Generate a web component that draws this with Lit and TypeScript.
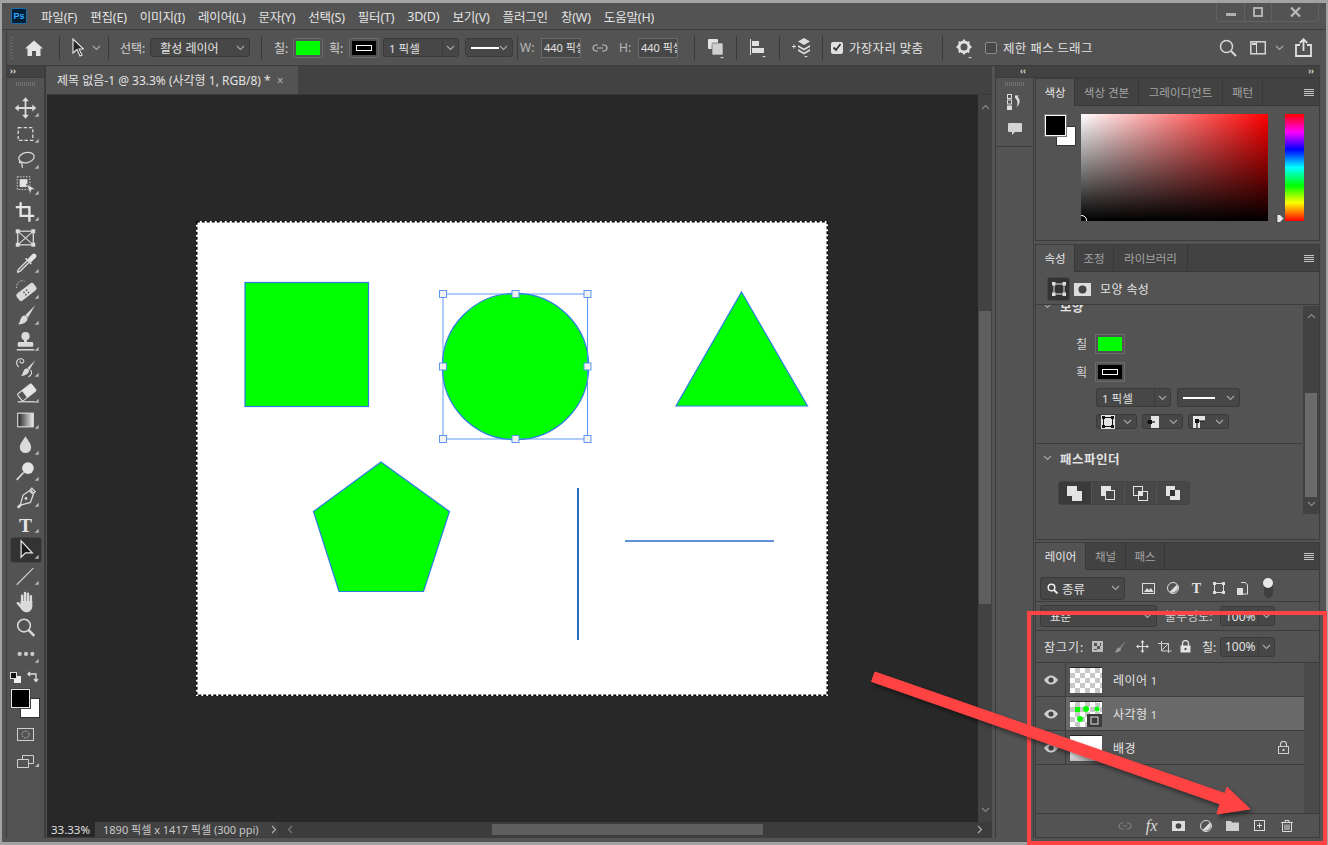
import { LitElement, css, html, svg } from 'lit';
import { customElement } from 'lit/decorators.js';

const chev = html`<svg class="chev" width="9" height="6" viewBox="0 0 9 6"><path d="M1 1l3.500 3.500L8 1" fill="none" stroke="#a8a8a8" stroke-width="1.1"/></svg>`;
const burger = html`<svg class="burger" width="10" height="8" viewBox="0 0 10 8"><path d="M0 .5h10M0 2.500h10M0 4.500h10M0 6.500h10" stroke="#c4c4c4" stroke-width="1"/></svg>`;
const eye = html`<svg width="14" height="10" viewBox="0 0 14 10"><path d="M0 5c2-3 4.500-4.500 7-4.500S12 2 14 5c-2 3-4.500 4.500-7 4.500S2 8 0 5z" fill="#cfcfcf"/><circle cx="7" cy="5" r="2.600" fill="#444"/></svg>`;

// tool icons, drawn on a 38x26 cell centred on 19,13
const tools = [
	svg`<path d="M19 4v18M10 13h18" stroke="#dadada" stroke-width="1.800"/><path d="M19 2l3.500 4h-7zM19 24l3.500-4h-7zM8 13l4-3.500v7zM30 13l-4-3.500v7z" fill="#dadada"/>`,
	svg`<rect x="11.500" y="6.500" width="15" height="13" fill="none" stroke="#dadada" stroke-width="1.300" stroke-dasharray="3.500 2"/>`,
	svg`<ellipse cx="20" cy="10.500" rx="8" ry="5.200" transform="rotate(-12 20 10.500)" fill="none" stroke="#dadada" stroke-width="1.300"/><path d="M13 14c-1 2 1 2 2 2s0 3 1 5" fill="none" stroke="#dadada" stroke-width="1.300"/>`,
	svg`<rect x="10.500" y="3.500" width="13" height="13" fill="none" stroke="#dadada" stroke-dasharray="1.500 1.500"/><rect x="13" y="6" width="8" height="8" fill="#e4e4e4"/><path d="M20 11l9 5-4 1-1 5z" fill="#e4e4e4" stroke="#535353" stroke-width=".8"/>`,
	svg`<path d="M14 3v14h14M9 8h14v15" fill="none" stroke="#e4e4e4" stroke-width="2.400"/>`,
	svg`<rect x="11" y="6" width="16" height="14" fill="none" stroke="#dadada" stroke-width="1.300"/><path d="M11 6l16 14M27 6L11 20" stroke="#dadada" stroke-width="1.100"/><path d="M9 4h4v4H9zM25 4h4v4h-4zM9 18h4v4H9zM25 18h4v4h-4z" fill="#dadada"/>`,
	svg`<path d="M21 8l5-5c1-1 2.500-1 3.500 0s1 2.500 0 3.500l-5 5z" fill="#e4e4e4"/><path d="M23 11l-9 9c-1 1-2 1-3 1.500-.5-1 0-2 1-3l9-9" fill="none" stroke="#dadada" stroke-width="1.400"/><path d="M19 7l6 6" stroke="#e4e4e4" stroke-width="1.500"/>`,
	svg`<g transform="rotate(-38 20 15)"><rect x="9" y="10.500" width="22" height="9" rx="2.500" fill="#dadada"/><path d="M17 13h1.500v1.500H17zM20.500 13H22v1.500h-1.500zM17 16h1.500v1.500H17zM20.500 16H22v1.500h-1.500z" fill="#535353"/></g><path d="M10 11a6 6 0 0 1 8-7" fill="none" stroke="#dadada" stroke-dasharray="1.500 1.500"/>`,
	svg`<path d="M29 2l-10 10 2.500 2.500z" fill="#dadada"/><path d="M18 12.500c2.500 0 4 2.500 2.500 5-1.500 3-5.500 4-9.500 4 2-1 2-3 3-5.500.8-2 2-3.500 4-3.500z" fill="#dadada"/>`,
	svg`<circle cx="19" cy="7" r="4.200" fill="#dadada"/><path d="M17.500 10h3v4h-3z" fill="#dadada"/><rect x="11" y="13" width="16" height="5" rx="1.500" fill="#dadada"/><path d="M10 21h18" stroke="#dadada" stroke-width="1.500"/>`,
	svg`<path d="M29 5l-8 8 2 2zM20 13.500c2 0 3.500 2 2 4-1.500 2.500-4 3.500-8 3.500 2-1 2-3 3-5 .7-1.500 1.500-2.500 3-2.500z" fill="#dadada"/><path d="M12 12C8 8 10 3 15 3.500c3 .5 3 4 .5 4.500C13 8 13 6 14 5.500M24 15c2 2 2 5-2 7" fill="none" stroke="#dadada" stroke-width="1.100"/>`,
	svg`<g transform="rotate(-38 20 11)"><rect x="11" y="7" width="18" height="9" rx="1.500" fill="none" stroke="#dadada" stroke-width="1.200"/><path d="M17 7h12v9H17z" fill="#e4e4e4"/></g><path d="M11 21h18" stroke="#dadada" stroke-width="1.300"/>`,
	svg`<rect x="11" y="6" width="16" height="14" fill="url(#gr)" stroke="#dadada" stroke-width="1.200"/>`,
	svg`<path d="M19 3c3 5 5.800 7.500 5.800 11.500a5.800 5.800 0 0 1-11.600 0C13.200 10.500 16 8 19 3z" fill="#dadada"/>`,
	svg`<circle cx="21.500" cy="9" r="6" fill="#e4e4e4"/><path d="M17 13.500L10 21" stroke="#dadada" stroke-width="1.800"/>`,
	svg`<path d="M25.500 3l3.500 3.500-1.500 1.500L24 4.500zM23 5.500l4 4-3 8-9 2.500-3 3-1-1 3-3 2.500-9z" fill="none" stroke="#dadada" stroke-width="1.300"/><circle cx="19.500" cy="13.500" r="1.400" fill="#dadada"/>`,
	svg`<text x="19" y="21" text-anchor="middle" class="ti">T</text>`,
	svg`<path d="M14.500 3.500v17l4.500-4.500h7z" fill="#1a1a1a" stroke="#e6e6e6" stroke-width="1.300"/>`,
	svg`<path d="M10 22L27 5" stroke="#cfcfcf" stroke-width="1.200"/>`,
	svg`<path d="M15.500 14V6.500M18.500 13V3.800M21.500 13V4.500M24.500 14V7" stroke="#dadada" stroke-width="2.500" stroke-linecap="round"/><path d="M14 12h12v5c0 4-3 6.500-6 6.500s-4.500-1.500-6-4l-4.500-5.500c1-1.500 2.500-1.200 3.500 0l1 1z" fill="#dadada"/>`,
	svg`<circle cx="17.500" cy="10.500" r="6.500" fill="none" stroke="#dadada" stroke-width="1.600"/><path d="M22 15l6 6" stroke="#dadada" stroke-width="2.500"/>`,
	svg`<circle cx="13" cy="13" r="2.200" fill="#c8c8c8"/><circle cx="19.500" cy="13" r="2.200" fill="#c8c8c8"/><circle cx="26" cy="13" r="2.200" fill="#c8c8c8"/>`,
];
const arrowed = [0, 1, 2, 3, 4, 6, 7, 8, 9, 10, 11, 12, 13, 14, 15, 16, 17, 18, 21];

const menus = ['파일(F)', '편집(E)', '이미지(I)', '레이어(L)', '문자(Y)', '선택(S)', '필터(T)', '3D(D)', '보기(V)', '플러그인', '창(W)', '도움말(H)'];

@customElement('app-root')
export class AppRoot extends LitElement {

	static styles = css`
		:host {
			display: block;
			width: 1328px;
			height: 845px;
			overflow: hidden;
			font-family: 'Noto Sans', 'Noto Sans CJK KR', sans-serif;
			font-size: 12px;
			color: #e2e2e2;
		}
		* { box-sizing: border-box; }
		svg { display: block; flex: none; }
		.app {
			position: relative;
			width: 1328px;
			height: 845px;
			padding: 3px 2px;
			background: #a3a3a3;
		}
		.win {
			height: 839px;
			display: flex;
			flex-direction: column;
			padding: 0 6px 4px 4px;
			background: #535353;
		}

		/* menu */
		.menu {
			height: 27px;
			margin-right: -6px;
			margin-left: -4px;
			padding-left: 9px;
			display: flex;
			align-items: center;
			border-bottom: 1px solid #3c3c3c;
			white-space: nowrap;
		}
		.ps {
			width: 16px;
			height: 16px;
			margin-right: 14px;
			background: #001e36;
			border: 1px solid #1d6ea8;
			border-radius: 2px;
			color: #31a8ff;
			font: bold 9px/14px 'Liberation Sans', sans-serif;
			text-align: center;
		}
		.menu span { margin-right: 13px; font-size: 12.500px; color: #e4e4e4; letter-spacing: -.17px; }
		.winbtns {
			margin-left: auto;
			margin-right: 7px;
			margin-top: -8px;
			width: 103px;
			height: 19px;
			display: flex;
			border: 1px solid #626262;
			border-top: 0;
			border-radius: 0 0 4px 4px;
		}
		.winbtns div { display: flex; align-items: center; justify-content: center; border-right: 1px solid #626262; }
		.winbtns div:last-child { border: 0; }
		.w1 { width: 28px; }
		.w2 { width: 27px; }
		.w3 { flex: 1; }

		/* options */
		.opts {
			height: 36px;
			display: flex;
			align-items: center;
			border-left: 1px solid #3c3c3c;
			border-bottom: 1px solid #3c3c3c;
			white-space: nowrap;
		}
		.g {
			height: 24px;
			display: flex;
			align-items: center;
			border-right: 1px solid #3a3a3a;
			flex: none;
		}
		.g1 { width: 53px; padding-left: 3px; }
		.grip { width: 3px; height: 22px; margin-right: 12px; background: repeating-linear-gradient(#666 0 1px, transparent 1px 3px); }
		.g2 { width: 49px; padding-left: 12px; gap: 8px; }
		.g3 { width: 153px; padding-left: 11px; gap: 5px; }
		.g4 { width: 256px; padding-left: 12px; }
		.g5 { width: 177px; padding-left: 2px; }
		.g6 { width: 42px; padding-left: 12px; }
		.g7 { width: 43px; padding-left: 12px; }
		.g8 { width: 43px; padding-left: 11px; }
		.g9 { width: 120px; padding-left: 8px; gap: 6px; }
		.g10 { padding-left: 12px; border: 0; }
		.right { margin-left: auto; margin-right: 8px; display: flex; align-items: center; }
		.mr-layout { margin-left: 13px; }
		.mr-chev { margin: 0 11px 0 9px; }
		.lbl { color: #d4d4d4; font-size: 12px; }
		.l14 { width: 19px; }
		.l15 { width: 20px; margin-left: 6px; }
		.l16 { width: 21px; color: #b8b8b8; }
		.l17 { width: 19px; margin-left: 11px; color: #b8b8b8; }
		.combo {
			height: 19px;
			display: flex;
			align-items: center;
			background: #474747;
			border: 1px solid #3a3a3a;
			border-radius: 3px;
			font-size: 11.500px;
			padding-left: 5px;
			flex: none;
		}
		.combo .chev { margin-left: auto; margin-right: 4px; }
		.combo .div { width: 1px; align-self: stretch; background: #3a3a3a; margin-left: auto; }
		.combo .div + .chev { margin-left: 3px; margin-right: 3px; }
		.line { width: 32px; height: 2px; background: #fff; }
		.c100 { width: 100px; padding-left: 9px; font-size: 12px; }
		.c76 { width: 76px; margin-left: 4px; }
		.c48 { width: 48px; margin-left: 6px; }
		.swatch {
			width: 30px;
			height: 20px;
			display: flex;
			align-items: center;
			justify-content: center;
			border: 1px solid #6a6a6a;
			padding: 2px;
			flex: none;
		}
		.swatch i { display: flex; width: 100%; height: 100%; align-items: center; justify-content: center; }
		.green { background: #00ff00; }
		.black { background: #000; }
		.swatch b { display: block; width: 16px; height: 6px; border: 1px solid #fff; }
		.num {
			width: 40px;
			height: 20px;
			border: 1px solid #6a6a6a;
			background: #474747;
			font-size: 11px;
			line-height: 18px;
			padding-left: 2px;
			overflow: hidden;
			flex: none;
		}
		.link { margin-left: 11px; }
		.ck {
			width: 12px;
			height: 12px;
			border-radius: 2px;
			flex: none;
			display: flex;
			align-items: center;
			justify-content: center;
		}
		.on { background: #e0e0e0; }
		.off { border: 1px solid #8a8a8a; background: #474747; margin: 0 6px 0 10px; }
		.txt { font-size: 12.500px; color: #e2e2e2; letter-spacing: .3px; }

		/* main */
		.main { flex: 1; min-height: 0; display: flex; }

		.tools {
			width: 40px;
			display: flex;
			flex-direction: column;
			border-left: 1px solid #3c3c3c;
			border-right: 2px solid #3c3c3c;
		}
		.coll {
			height: 12px;
			background: #424242;
			border-bottom: 1px solid #3c3c3c;
			color: #ddd;
			font-size: 8px;
			line-height: 10px;
			padding-left: 3px;
			font-weight: bold;
			flex: none;
		}
		.tgrip { height: 4px; margin: 4px 9px 0; background: repeating-linear-gradient(90deg, #707070 0 1px, transparent 1px 2px); flex: none; }
		.tlist { margin-top: 9px; display: flex; flex-direction: column; }
		.tool { width: 37px; height: 26px; position: relative; }
		.tool.act::before {
			content: '';
			position: absolute;
			left: 3px;
			right: 2px;
			top: 0;
			bottom: 0;
			background: #333;
			border: 1px solid #454545;
			border-radius: 3px;
		}
		.tool svg { position: relative; }
		.ti { font: bold 20px 'Liberation Serif', serif; fill: #e4e4e4; }
		.fb { position: relative; height: 38px; margin-top: 0; flex: none; }
		.fg, .bg { position: absolute; width: 19px; height: 19px; border: 1px solid #e8e8e8; }
		.fg { background: #000; left: 4px; top: 2px; z-index: 1; box-shadow: 0 0 0 1px #444; }
		.bg { background: #fff; left: 13px; top: 11px; width: 20px; height: 20px; border-color: #333; }
		.ministack { display: flex; align-items: center; gap: 6px; padding-left: 3px; height: 20px; }
		.qm { margin-top: 3px; }
		.sm { margin-top: 12px; }

		.docs { width: 946px; flex: none; display: flex; flex-direction: column; padding-left: 1px; }
		.tabbar { height: 29px; background: #424242; flex: none; display: flex; align-items: flex-end; border-bottom: 1px solid #383838; }
		.doctab {
			width: 251px;
			height: 28px;
			background: #535353;
			display: flex;
			align-items: center;
			padding-left: 10px;
			font-size: 12px;
			color: #e2e2e2;
			white-space: nowrap;
		}
		.doctab em { font-style: normal; margin-left: 6px; color: #b0b0b0; }
		.canrow { flex: 1; min-height: 0; display: flex; }
		.canvas { flex: 1; background: #282828; display: flex; align-items: center; justify-content: center; }
		.doc { width: 632px; height: 475px; background: #fff; margin-right: 1px; }
		.vs {
			width: 14px;
			background: #424242;
			display: flex;
			flex-direction: column;
			align-items: center;
			padding: 9px 0;
			justify-content: space-between;
			position: relative;
		}
		.vthumb { position: absolute; left: 1px; right: 1px; top: 216px; height: 293px; background: #5e5e5e; }
		.status { height: 16px; flex: none; display: flex; align-items: center; background: #424242; border-bottom: 1px solid #3c3c3c; font-size: 11px; white-space: nowrap; }
		.zoom { width: 48px; height: 100%; background: #282828; padding-left: 4px; line-height: 15px; color: #e0e0e0; font-size: 11.500px; }
		.info { width: 183px; height: 100%; padding-left: 8px; line-height: 15px; color: #c8c8c8; display: flex; align-items: center; }
		.info svg { margin-left: 12px; }
		.hs { flex: 1; height: 100%; background: #3c3c3c; position: relative; display: flex; align-items: center; justify-content: space-between; padding: 0 9px; }
		.hthumb { position: absolute; left: 214px; width: 271px; top: 2px; bottom: 2px; background: #5e5e5e; }

		/* dock */
		.dock { width: 325px; margin-left: 3px; display: flex; flex-direction: column; flex: none; }
		.dcoll {
			height: 12px;
			flex: none;
			background: #424242;
			border-bottom: 1px solid #3c3c3c;
			border-left: 1px solid #3c3c3c;
			display: flex;
			justify-content: space-between;
			padding: 0 6px 0 24px;
			font: bold 8px/10px 'Noto Sans', sans-serif;
			color: #ddd;
		}
		.dbody { flex: 1; min-height: 0; display: flex; }
		.narrow {
			width: 39px;
			margin-right: 1px;
			border-left: 1px solid #3c3c3c;
			border-right: 1px solid #3c3c3c;
			flex: none;
		}
		.ntop { height: 69px; border-bottom: 1px solid #3c3c3c; display: flex; flex-direction: column; align-items: center; }
		.ngrip { width: 20px; height: 4px; margin-top: 4px; background: repeating-linear-gradient(90deg, #707070 0 1px, transparent 1px 2px); }
		.nh { margin-top: 8px; }
		.nc { margin-top: 13px; }
		.panels { width: 285px; display: flex; flex-direction: column; }
		.panel { border: 1px solid #3c3c3c; display: flex; flex-direction: column; flex: none; }
		.p1 { height: 163px; margin-bottom: 3px; }
		.p2 { height: 296px; margin-bottom: 2px; }
		.p3 { flex: 1; min-height: 0; }
		.tabs { height: 27px; display: flex; background: #424242; border-bottom: 1px solid #383838; flex: none; font-size: 11.500px; color: #a4a4a4; }
		.tabs div { display: flex; align-items: center; justify-content: center; border-right: 1px solid #383838; white-space: nowrap; padding-bottom: 1px; }
		.tabs .a { background: #535353; color: #e6e6e6; height: 27px; }
		.tabs .burger { margin: 10px 5px 0 auto; }
		.t39 { width: 39px; }
		.t40 { width: 40px; }
		.t50 { width: 50px; }
		.t64 { width: 64px; }
		.t74 { width: 74px; }
		.t84 { width: 84px; }
		.colorbody { position: relative; flex: 1; display: flex; padding: 8px 0 0 45px; }
		.cfg, .cbg { position: absolute; }
		.cbg { left: 20px; top: 20px; width: 20px; height: 20px; background: #fff; border: 1px solid #333; }
		.cfg { left: 9px; top: 9px; width: 21px; height: 21px; background: #000; border: 1px solid #fff; outline: 1px solid #777; z-index: 1; }
		.field { width: 187px; height: 107px; position: relative; background: linear-gradient(to top, #000, transparent), linear-gradient(to right, #fff, #f00); }
		.cursor { position: absolute; left: 0; bottom: 0; }
		.hue {
			width: 19px;
			height: 107px;
			margin-left: 17px;
			background: linear-gradient(#f00, #f0f 17%, #00f 33%, #0ff 50%, #0f0 67%, #ff0 83%, #f00);
		}
		.mark { position: absolute; left: 240px; top: 108px; }
		.shaperow { height: 33px; flex: none; display: flex; align-items: center; padding: 2px 0 0 11px; border-bottom: 1px solid #3c3c3c; }
		.sbtn { width: 23px; height: 24px; background: #333; border: 1px solid #454545; border-radius: 3px; display: flex; align-items: center; justify-content: center; margin-right: 4px; }
		.stitle { margin-left: 9px; font-size: 12px; letter-spacing: .4px; }
		.pbody { flex: 1; min-height: 0; display: flex; overflow: hidden; }
		.pcontent { width: 267px; flex: none; overflow: hidden; }
		.sec { margin-top: -10px; height: 22px; display: flex; align-items: center; padding-left: 7px; gap: 8px; font-weight: bold; font-size: 12.500px; letter-spacing: .3px; }
		.prop { display: flex; align-items: center; height: 20px; }
		.prop .lbl { width: 59px; text-align: right; padding-right: 8px; }
		.pf1 { margin-top: 17px; }
		.pf2 { margin-top: 8px; }
		.ctl { display: flex; margin: 6px 0 0 60px; gap: 6px; }
		.c75 { width: 75px; }
		.c63 { width: 63px; }
		.ctl2 { display: flex; margin: 7px 0 0 60px; gap: 5px; }
		.c41 { width: 41px; height: 15px; padding-left: 4px; }
		.hr { height: 1px; margin: 14px 1px 0 0; background: #3c3c3c; }
		.sec2 { margin-top: 3px; height: 22px; display: flex; align-items: center; padding-left: 7px; gap: 8px; font-weight: bold; font-size: 12.500px; letter-spacing: .5px; }
		.pfb { display: flex; margin: 12px 0 0 22px; width: 132px; height: 24px; border: 1px solid #444; border-radius: 3px; }
		.pfb div { flex: 1; display: flex; align-items: center; justify-content: center; background: #474747; border-right: 1px solid #535353; }
		.pfb div:first-child { background: #3a3a3a; }
		.pfb div:last-child { border: 0; }
		.pscroll { width: 16px; height: 208px; margin-top: 1px; background: #424242; position: relative; display: flex; flex-direction: column; justify-content: space-between; align-items: center; padding: 7px 0; }
		.pthumb { position: absolute; left: 2px; right: 2px; top: 87px; height: 104px; background: #6a6a6a; }

		.frow { height: 32px; flex: none; display: flex; align-items: center; padding: 5px 0 0 4px; border-bottom: 1px solid #3c3c3c; }
		.c84 { width: 85px; height: 23px; font-size: 12.500px; padding-left: 6px; gap: 4px; }
		.ficons { display: flex; align-items: center; margin-left: 17px; gap: 10px; }
		.ml1 { margin-left: 1px; }
		.ml2 { margin-left: 2px; }
		.ml3 { margin-left: 3px; }
		.ttext { font-size: 14px; }
		.toggle { width: 9px; height: 19px; border-radius: 5px; background: #3f3f3f; position: relative; margin-left: 6px; }
		.toggle::after { content: ''; position: absolute; left: -1px; top: -1px; width: 10px; height: 10px; border-radius: 50%; background: #e8e8e8; }
		.brow { height: 29px; flex: none; display: flex; align-items: center; padding-left: 4px; border-bottom: 1px solid #3c3c3c; }
		.c117 { width: 117px; height: 22px; padding-left: 9px; }
		.oplbl { margin-left: 8px; width: 55px; color: #cfcfcf; white-space: nowrap; }
		.pct { width: 55px; height: 20px; padding-left: 4px; font-size: 12px; }
		.pct .div { margin-left: auto; }
		.lrow { height: 32px; flex: none; display: flex; align-items: center; padding-left: 8px; white-space: nowrap; }
		.locks { width: 110px; display: flex; align-items: center; gap: 8px; margin-left: 9px; }
		.lockl { width: 39px; letter-spacing: 1px; }
		.fill { width: 18px; }
		.list { flex: 1; min-height: 0; display: flex; }
		.rows { width: 268px; flex: none; }
		.lay { height: 34px; display: flex; align-items: center; border-bottom: 1px solid #3c3c3c; font-size: 12px; }
		.lay.sel { background: #6a6a6a; }
		.lay .e { width: 30px; height: 100%; display: flex; align-items: center; justify-content: center; border-right: 1px solid #3c3c3c; background: #535353; flex: none; }
		.th { width: 32px; height: 26px; margin-left: 4px; flex: none; border-top: 1px solid #222; position: relative; }
		.chk { background: repeating-conic-gradient(#c8c8c8 0 25%, #fff 0 50%) 0 0/10px 10px; }
		.wh { background: linear-gradient(#fff 70%, #bbb); }
		.name { margin-left: 11px; color: #e4e4e4; letter-spacing: .5px; }
		.name small { font-size: 11px; margin-left: 3px; }
		.bglock { margin-left: auto; margin-right: 15px; }
		.lscroll { flex: 1; background: #4a4a4a; }
		.foot { height: 24px; flex: none; display: flex; align-items: center; border-top: 1px solid #3c3c3c; padding-left: 75px; position: relative; }
		.fx { font: italic 16px 'Liberation Serif', serif; color: #dcdcdc; }
		.ficon { width: 27px; display: flex; justify-content: center; }

		/* annotation drawn over the screenshot */
		.redbox { position: absolute; left: 1027px; top: 611px; width: 300px; height: 234px; border: 4px solid #ff4343; }
		.arrow { position: absolute; left: 0; top: 0; filter: drop-shadow(2px 3px 2px rgba(0, 0, 0, .45)); }
	`

	private tool(i: number) {
		const tri = arrowed.includes(i) ? svg`<path d="M32.500 18v4h-4z" fill="#bdbdbd"/>` : '';
		return html`<div class="tool ${i === 17 ? 'act' : ''}">
			<svg width="37" height="26" viewBox="0 0 38 26">
				<defs><linearGradient id="gr"><stop offset="0" stop-color="#222"/><stop offset="1" stop-color="#eee"/></linearGradient></defs>
				${tools[i]}${tri}
			</svg>
		</div>`;
	}

	private options() {
		return html`<div class="opts">
			<div class="g g1">
				<div class="grip"></div>
				<svg width="18" height="16" viewBox="0 0 18 16"><path d="M9 .5L18 8.500h-2.500V16h-4.500v-5H7v5H2.500V8.500H0z" fill="#e4e4e4"/></svg>
			</div>
			<div class="g g2">
				<svg width="12" height="19" viewBox="0 0 12 19"><path d="M1 1v14l4-3.500 3 6.500 2-1-3-6h4.500z" fill="#222" stroke="#e8e8e8" stroke-width="1.100"/></svg>
				${chev}
			</div>
			<div class="g g3">
				<span class="lbl">선택:</span>
				<div class="combo c100">활성 레이어 ${chev}</div>
			</div>
			<div class="g g4">
				<span class="lbl l14">칠:</span>
				<div class="swatch"><i class="green"></i></div>
				<span class="lbl l15">획:</span>
				<div class="swatch"><i class="black"><b></b></i></div>
				<div class="combo c76">1 픽셀<span class="div"></span>${chev}</div>
				<div class="combo c48"><span class="line"></span>${chev}</div>
			</div>
			<div class="g g5">
				<span class="lbl l16">W:</span>
				<div class="num">440 픽셀</div>
				<svg class="link" width="16" height="8" viewBox="0 0 16 8"><path d="M6 1H4a3 3 0 0 0 0 6h2M10 1h2a3 3 0 0 1 0 6h-2M5 4h6" fill="none" stroke="#bcbcbc" stroke-width="1.200"/></svg>
				<span class="lbl l17">H:</span>
				<div class="num">440 픽셀</div>
			</div>
			<div class="g g6">
				<svg width="19" height="22" viewBox="0 0 19 22"><rect x="1" y="2" width="10" height="10" rx="1" fill="#e4e4e4"/><rect x="5" y="6" width="11" height="12" rx="1" fill="#cfcfcf" stroke="#535353" stroke-width=".6"/><path d="M13 20h4l-2 1.500z" fill="#ddd"/></svg>
			</div>
			<div class="g g7">
				<svg width="19" height="22" viewBox="0 0 19 22"><path d="M1.500 2v16" stroke="#ddd"/><path d="M3 4h7v5H3zM3 11h12v5H3z" fill="#e0e0e0"/><path d="M13 19h4l-2 1.500z" fill="#ddd"/></svg>
			</div>
			<div class="g g8">
				<svg width="22" height="22" viewBox="0 0 22 22"><path d="M1 9.500h4M3 7.500v4" stroke="#ddd"/><path d="M13 1l6 3.500-6 3.500-6-3.500zM7 8l6 3.500L19 8v2l-6 3.500L7 10zM7 12l6 3.500 6-3.500v2l-6 3.500L7 14z" fill="#dcdcdc"/><path d="M13 19h4l-2 1.500z" fill="#ddd"/></svg>
			</div>
			<div class="g g9">
				<div class="ck on"><svg width="10" height="9" viewBox="0 0 10 9"><path d="M1.500 4.500L4 7l4.500-6" fill="none" stroke="#333" stroke-width="1.800"/></svg></div>
				<span class="txt">가장자리 맞춤</span>
			</div>
			<div class="g g10">
				<svg width="20" height="22" viewBox="0 0 20 22"><circle cx="9" cy="10" r="5" fill="none" stroke="#e0e0e0" stroke-width="3"/><path d="M9 2.500v3M9 14.500v3M1.500 10h3M13.500 10h3M3.800 4.800l2 2M12.200 13.200l2 2M14.200 4.800l-2 2M5.800 13.200l-2 2" stroke="#e0e0e0" stroke-width="2"/><path d="M13 20h4l-2 1.500z" fill="#ddd"/></svg>
				<div class="ck off"></div>
				<span class="txt">제한 패스 드래그</span>
			</div>
			<div class="right">
				<svg width="18" height="18" viewBox="0 0 18 18"><circle cx="7.500" cy="7.500" r="6" fill="none" stroke="#d8d8d8" stroke-width="1.500"/><path d="M12 12l5 5" stroke="#d8d8d8" stroke-width="2"/></svg>
				<svg class="mr-layout" width="16" height="15" viewBox="0 0 16 15"><rect x=".8" y="1.800" width="14.500" height="12" fill="none" stroke="#d8d8d8" stroke-width="1.500"/><rect x="2" y="3" width="4" height="2" fill="#d8d8d8"/><path d="M6.500 2v12" stroke="#d8d8d8"/></svg>
				<svg class="mr-chev" width="9" height="6" viewBox="0 0 9 6"><path d="M1 1l3.500 3.500L8 1" fill="none" stroke="#a8a8a8" stroke-width="1.100"/></svg>
				<svg width="17" height="19" viewBox="0 0 17 19"><path d="M5 7H1v11h15V7h-4M8.500 13V1.500M4.800 5l3.700-3.700L12.200 5" fill="none" stroke="#e0e0e0" stroke-width="1.800"/></svg>
			</div>
		</div>`;
	}

	private toolbar() {
		return html`<div class="tools">
			<div class="coll">››</div>
			<div class="tgrip"></div>
			<div class="tlist">${tools.map((_, i) => this.tool(i))}</div>
			<div class="ministack">
				<svg width="11" height="11" viewBox="0 0 11 11"><rect x="4" y="4" width="7" height="7" fill="#eee"/><rect x=".5" y=".5" width="6" height="6" fill="#111" stroke="#ddd"/></svg>
				<svg width="12" height="12" viewBox="0 0 12 12"><path d="M1 3h8v7M3 1L1 3l2 2M7 8l2 2.500L11 8" fill="none" stroke="#ddd" stroke-width="1.300"/></svg>
			</div>
			<div class="fb"><div class="fg"></div><div class="bg"></div></div>
			<svg class="qm" width="37" height="14" viewBox="0 0 37 14"><rect x="10.500" y=".5" width="16" height="12" fill="none" stroke="#cfcfcf"/><circle cx="18.500" cy="6.500" r="3.500" fill="none" stroke="#cfcfcf" stroke-dasharray="1 1"/></svg>
			<svg class="sm" width="37" height="14" viewBox="0 0 37 14"><path d="M10.500 5.500h11v8h-11zM15.500 5V1.500h11v8H22" fill="none" stroke="#cfcfcf"/><path d="M32 9v4h-4z" fill="#bdbdbd"/></svg>
		</div>`;
	}

	private canvas() {
		const handles = [[443, 294], [515.5, 294], [587.500, 294], [443, 366.500], [587.500, 366.500], [443, 439], [515.500, 439], [587.500, 439]];
		return html`<div class="canvas">
			<div class="doc">
				<svg width="632" height="475" viewBox="196 221 632 475">
					<rect x="196.750" y="221.750" width="630.500" height="473.500" fill="none" stroke="#000" stroke-width="1.500" stroke-dasharray="3 2"/>
					<g fill="#00ff00" stroke="#2b7de0" stroke-width="1.200">
						<rect x="245" y="282.500" width="123.500" height="124"/>
						<circle cx="515.500" cy="366.500" r="73.200"/>
						<path d="M741.500 292L807.500 406H676z"/>
						<path d="M381 462L449.500 511.500 423.500 591.500H339L313.500 511.500z"/>
					</g>
					<path d="M578 488v152" stroke="#2a6cc8" stroke-width="2"/>
					<path d="M625 541h149" stroke="#2a6cc8" stroke-width="1.300"/>
					<rect x="443" y="294" width="144.500" height="145" fill="none" stroke="#4f8ef0" stroke-width=".9"/>
					${handles.map(([x, y]) => svg`<rect x="${x - 3.500}" y="${y - 3.500}" width="7" height="7" fill="#f2f2f2" stroke="#4f8ef0" stroke-width=".9"/>`)}
				</svg>
			</div>
		</div>`;
	}

	private docs() {
		const up = html`<svg width="9" height="6" viewBox="0 0 9 6"><path d="M1 5l3.500-3.500L8 5" fill="none" stroke="#8a8a8a" stroke-width="1.100"/></svg>`;
		const down = html`<svg width="9" height="6" viewBox="0 0 9 6"><path d="M1 1l3.500 3.500L8 1" fill="none" stroke="#8a8a8a" stroke-width="1.100"/></svg>`;
		const left = html`<svg width="6" height="9" viewBox="0 0 6 9"><path d="M5 1L1.500 4.500 5 8" fill="none" stroke="#7a7a7a" stroke-width="1.100"/></svg>`;
		const right = html`<svg width="6" height="9" viewBox="0 0 6 9"><path d="M1 1l3.500 3.500L1 8" fill="none" stroke="#b0b0b0" stroke-width="1.100"/></svg>`;
		return html`<div class="docs">
			<div class="tabbar">
				<div class="doctab">제목 없음-1 @ 33.3% (사각형 1, RGB/8) * <em>×</em></div>
			</div>
			<div class="canrow">
				${this.canvas()}
				<div class="vs"><div class="vthumb"></div>${up}${down}</div>
			</div>
			<div class="status">
				<div class="zoom">33.33%</div>
				<div class="info">1890 픽셀 x 1417 픽셀 (300 ppi)${right}</div>
				<div class="hs"><div class="hthumb"></div>${left}${right}</div>
			</div>
		</div>`;
	}

	private colorPanel() {
		return html`<div class="panel p1">
			<div class="tabs">
				<div class="a t39">색상</div><div class="t64">색상 견본</div><div class="t84">그레이디언트</div><div class="t40">패턴</div>${burger}
			</div>
			<div class="colorbody">
				<div class="cfg"></div><div class="cbg"></div>
				<div class="field"><svg class="cursor" width="6" height="6" viewBox="0 0 6 6"><path d="M0 .5a5 5 0 0 1 5.500 5.500" fill="none" stroke="#fff"/></svg></div>
				<svg class="mark" width="9" height="9" viewBox="0 0 9 9"><path d="M1 .5h3l4 4-4 4H1z" fill="#e8e8e8" stroke="#333" stroke-width=".7"/></svg>
				<div class="hue"></div>
			</div>
		</div>`;
	}

	private propsPanel() {
		const sq = html`<svg width="14" height="14" viewBox="0 0 14 14"><rect x="0" y="0" width="14" height="14" fill="#e4e4e4"/><rect x="2.500" y="2.500" width="9" height="9" fill="none" stroke="#111"/><path d="M1 1h3v3H1zM10 1h3v3h-3zM1 10h3v3H1zM10 10h3v3h-3z" fill="#111"/></svg>`;
		const al = html`<svg width="14" height="12" viewBox="0 0 14 12"><path d="M4 0h8v12H4z" fill="#e4e4e4"/><path d="M0 6h8" stroke="#111" stroke-width="1.200"/><rect x="1" y="4" width="4" height="4" fill="#111"/></svg>`;
		const jn = html`<svg width="12" height="12" viewBox="0 0 12 12"><path d="M0 0h12v5H7v7H0z" fill="#e4e4e4"/><path d="M4 12V5h8" fill="none" stroke="#111" stroke-width="1.200"/><rect x="2" y="3" width="4" height="4" fill="#111"/></svg>`;
		return html`<div class="panel p2">
			<div class="tabs">
				<div class="a t39">속성</div><div class="t39">조정</div><div class="t74">라이브러리</div>${burger}
			</div>
			<div class="shaperow">
				<div class="sbtn"><svg width="14" height="14" viewBox="0 0 14 14"><rect x="2" y="2" width="10" height="10" fill="none" stroke="#ddd"/><path d="M0 0h3.500v3.500H0zM10.500 0H14v3.500h-3.500zM0 10.500h3.500V14H0zM10.500 10.500H14V14h-3.500z" fill="#ddd"/></svg></div>
				<svg width="17" height="13" viewBox="0 0 17 13"><rect width="17" height="13" fill="#dcdcdc"/><circle cx="8.500" cy="6.500" r="4" fill="#444"/></svg>
				<span class="stitle">모양 속성</span>
			</div>
			<div class="pbody">
				<div class="pcontent">
					<div class="sec">${chev}<span>모양</span></div>
					<div class="prop pf1"><span class="lbl">칠</span><div class="swatch"><i class="green"></i></div></div>
					<div class="prop pf2"><span class="lbl">획</span><div class="swatch"><i class="black"><b></b></i></div></div>
					<div class="ctl">
						<div class="combo c75">1 픽셀<span class="div"></span>${chev}</div>
						<div class="combo c63"><span class="line"></span>${chev}</div>
					</div>
					<div class="ctl2">
						<div class="combo c41">${sq}${chev}</div>
						<div class="combo c41">${al}${chev}</div>
						<div class="combo c41">${jn}${chev}</div>
					</div>
					<div class="hr"></div>
					<div class="sec2">${chev}<span>패스파인더</span></div>
					<div class="pfb">
						<div><svg width="15" height="15" viewBox="0 0 15 15"><path d="M0 0h10v5h5v10H5v-5H0z" fill="#e4e4e4"/></svg></div>
						<div><svg width="14" height="14" viewBox="0 0 14 14"><path d="M0 0h10v4H4v6H0z" fill="#e4e4e4"/><rect x="4.500" y="4.500" width="9" height="9" fill="none" stroke="#e4e4e4"/></svg></div>
						<div><svg width="15" height="15" viewBox="0 0 15 15"><rect x=".5" y=".5" width="9" height="9" fill="none" stroke="#e4e4e4"/><rect x="5.500" y="5.500" width="9" height="9" fill="none" stroke="#e4e4e4"/><rect x="5.500" y="5.500" width="4" height="4" fill="#e4e4e4"/></svg></div>
						<div><svg width="14" height="14" viewBox="0 0 14 14"><path d="M0 0h9v4h5v10H4v-4H0z" fill="#e4e4e4"/><rect x="4" y="4" width="5" height="6" fill="#333"/></svg></div>
					</div>
				</div>
				<div class="pscroll">
					<div class="pthumb"></div>
					<svg width="9" height="6" viewBox="0 0 9 6"><path d="M1 5l3.500-3.500L8 5" fill="none" stroke="#8a8a8a" stroke-width="1.100"/></svg>
					<svg width="9" height="6" viewBox="0 0 9 6"><path d="M1 1l3.500 3.500L8 1" fill="none" stroke="#8a8a8a" stroke-width="1.100"/></svg>
				</div>
			</div>
		</div>`;
	}

	private layersPanel() {
		const lockGlyph = (c: string) => html`<svg width="11" height="13" viewBox="0 0 11 13"><path d="M2.500 6V3.500a3 3 0 0 1 6 0V6" fill="none" stroke="${c}" stroke-width="1.300"/><rect x=".5" y="5.500" width="10" height="7" fill="${c}"/><rect x="4.500" y="8" width="2" height="2" fill="#535353"/></svg>`;
		return html`<div class="panel p3">
			<div class="tabs">
				<div class="a t50">레이어</div><div class="t40">채널</div><div class="t39">패스</div>${burger}
			</div>
			<div class="frow">
				<div class="combo c84">
					<svg width="11" height="11" viewBox="0 0 11 11"><circle cx="4.500" cy="4.500" r="3.300" fill="none" stroke="#eee" stroke-width="1.500"/><path d="M7 7l3.500 3.500" stroke="#eee" stroke-width="1.800"/></svg>
					종류 ${chev}
				</div>
				<div class="ficons">
					<svg width="13" height="11" viewBox="0 0 13 11"><rect x=".5" y=".5" width="12" height="10" fill="none" stroke="#ddd"/><path d="M2 9l3-4 2 2 2-2 2.500 4z" fill="#ddd"/></svg>
					<svg class="ml2" width="12" height="12" viewBox="0 0 12 12"><circle cx="6" cy="6" r="5.500" fill="#535353" stroke="#ddd"/><path d="M10 2.500A5.500 5.500 0 0 1 2.500 10z" fill="#ddd"/></svg>
					<svg class="ml1" width="13" height="12" viewBox="0 0 13 12"><text x="6.500" y="11" text-anchor="middle" class="ti ttext">T</text></svg>
					<svg width="12" height="12" viewBox="0 0 12 12"><rect x="1.500" y="1.500" width="9" height="9" fill="none" stroke="#ddd"/><path d="M0 0h3v3H0zM9 0h3v3H9zM0 9h3v3H0zM9 9h3v3H9z" fill="#ddd"/></svg>
					<svg class="ml2" width="11" height="13" viewBox="0 0 11 13"><path d="M4 .5h4.500l2 2.500v9H4" fill="none" stroke="#ddd"/><rect x="0" y="6" width="6" height="7" fill="#ddd"/></svg>
					<div class="toggle"></div>
				</div>
			</div>
			<div class="brow">
				<div class="combo c117">표준 ${chev}</div>
				<span class="oplbl">불투명도:</span>
				<div class="combo pct">100%<span class="div"></span>${chev}</div>
			</div>
			<div class="brow lrow">
				<span class="lockl">잠그기:</span>
				<div class="locks">
					<svg width="11" height="11" viewBox="0 0 11 11"><rect width="11" height="11" fill="#bbb"/><path d="M2 2h3v3H2zM5 5h3v3H5zM8 2h1v3H8zM2 8h3v1H2z" fill="#555"/></svg>
					<svg class="ml3" width="13" height="13" viewBox="0 0 13 13"><path d="M12.500 .5L6 7l1 1zM5.500 7.500c1.500 0 2 1.500 1 3-1 1-3 2-6 2 1-.5 1.500-2 2-3 .5-1.300 1.500-2 3-2z" fill="#999"/></svg>
					<svg class="ml1" width="13" height="13" viewBox="0 0 13 13"><path d="M6.500 1.500v10M1.500 6.500h10" stroke="#ddd" stroke-width="1.200"/><path d="M6.500 0l2 2.500h-4zM6.500 13l2-2.500h-4zM0 6.500L2.500 4.500v4zM13 6.500l-2.500-2v4z" fill="#ddd"/></svg>
					<svg class="ml1" width="14" height="13" viewBox="0 0 14 13"><path d="M3.500 1v10h10M0 3.500h10.500V13M3 11L11 3" fill="none" stroke="#ccc"/></svg>
					${lockGlyph('#e2e2e2')}
				</div>
				<span class="fill">칠:</span>
				<div class="combo pct">100%<span class="div"></span>${chev}</div>
			</div>
			<div class="list">
				<div class="rows">
					<div class="lay"><div class="e">${eye}</div><div class="th chk"></div><span class="name">레이어<small>1</small></span></div>
					<div class="lay sel"><div class="e">${eye}</div>
						<div class="th chk">
							<svg width="32" height="25" viewBox="0 0 32 25"><path d="M0 5V0h6M26 0h6v5M0 20v5h6M26 25h6v-5" fill="none" stroke="#fff" stroke-width="1.500"/><rect x="5" y="5" width="5" height="5" fill="#0f0"/><circle cx="16" cy="7" r="3" fill="#0f0"/><circle cx="27" cy="7" r="2.500" fill="#0f0"/><circle cx="10" cy="17" r="3" fill="#0f0"/><rect x="17" y="12" width="15" height="13" fill="#3c3c3c"/><rect x="21" y="15" width="7" height="7" fill="none" stroke="#ddd"/></svg>
						</div>
						<span class="name">사각형<small>1</small></span>
					</div>
					<div class="lay"><div class="e">${eye}</div><div class="th wh"></div><span class="name">배경</span><span class="bglock"><svg width="11" height="13" viewBox="0 0 11 13"><path d="M2.500 6V3.500a3 3 0 0 1 6 0V6" fill="none" stroke="#d0d0d0" stroke-width="1.100"/><rect x=".5" y="5.500" width="10" height="7" fill="none" stroke="#d0d0d0"/><rect x="4.500" y="8" width="2" height="2" fill="#d0d0d0"/></svg></span></div>
				</div>
				<div class="lscroll"></div>
			</div>
			<div class="foot">
				<div class="ficon"><svg width="14" height="8" viewBox="0 0 14 8"><path d="M5.500 1H4a3 3 0 0 0 0 6h1.500M8.500 1H10a3 3 0 0 1 0 6H8.500M4.500 4h5" fill="none" stroke="#7c7c7c" stroke-width="1.200"/></svg></div>
				<div class="ficon fx">fx</div>
				<div class="ficon"><svg width="13" height="10" viewBox="0 0 13 10"><rect width="13" height="10" fill="#dcdcdc"/><circle cx="6.500" cy="5" r="2.800" fill="#444"/></svg></div>
				<div class="ficon"><svg width="12" height="12" viewBox="0 0 12 12"><circle cx="6" cy="6" r="5.500" fill="#535353" stroke="#ddd"/><path d="M10 2.500A5.500 5.500 0 0 1 2.500 10z" fill="#ddd"/></svg></div>
				<div class="ficon"><svg width="13" height="10" viewBox="0 0 13 10"><path d="M0 0h5l1 1.500h7V10H0z" fill="#cfcfcf"/></svg></div>
				<div class="ficon"><svg width="11" height="11" viewBox="0 0 11 11"><rect x=".5" y=".5" width="10" height="10" fill="none" stroke="#dcdcdc"/><path d="M5.500 3v5M3 5.500h5" stroke="#dcdcdc"/></svg></div>
				<div class="ficon"><svg width="12" height="12" viewBox="0 0 12 12"><path d="M0 2.500h12M4 2.500V.5h4v2M1.500 3v8.500h9V3M4 4.500v5.500M6 4.500v5.500M8 4.500v5.500" fill="none" stroke="#dcdcdc"/></svg></div>
			</div>
		</div>`;
	}

	private dock() {
		return html`<div class="dock">
			<div class="dcoll"><span>‹‹</span><span>››</span></div>
			<div class="dbody">
				<div class="narrow">
					<div class="ntop">
						<div class="ngrip"></div>
						<svg class="nh" width="15" height="16" viewBox="0 0 15 16"><rect x=".5" y=".5" width="4" height="4" fill="none" stroke="#ddd"/><rect x=".5" y="6" width="4" height="4" fill="none" stroke="#ddd"/><rect x="0" y="11.500" width="5" height="4.500" fill="#ddd"/><path d="M8 1.500h4L10.500 3c3 2 3 7-1 10 1.500-3 1.500-7-1.500-9z" fill="#ddd"/></svg>
						<svg class="nc" width="14" height="13" viewBox="0 0 14 13"><path d="M1 0h12a1 1 0 0 1 1 1v7a1 1 0 0 1-1 1H7l-3 3V9H1a1 1 0 0 1-1-1V1a1 1 0 0 1 1-1z" fill="#d4d4d4"/></svg>
					</div>
				</div>
				<div class="panels">
					${this.colorPanel()}
					${this.propsPanel()}
					${this.layersPanel()}
				</div>
			</div>
		</div>`;
	}

	render() {
		return html`<div class="app">
			<div class="win">
				<div class="menu">
					<div class="ps">Ps</div>
					${menus.map((m) => html`<span>${m}</span>`)}
					<div class="winbtns">
						<div class="w1"><svg width="10" height="10" viewBox="0 0 10 10"><rect x="0" y="6" width="10" height="3" fill="#b0b0b0"/></svg></div>
						<div class="w2"><svg width="10" height="10" viewBox="0 0 10 10"><rect x="1" y="1" width="8" height="8" fill="none" stroke="#b0b0b0" stroke-width="2"/></svg></div>
						<div class="w3"><svg width="11" height="10" viewBox="0 0 11 10"><path d="M1 .5l9 9M10 .5l-9 9" stroke="#b8b8b8" stroke-width="2.200"/></svg></div>
					</div>
				</div>
				${this.options()}
				<div class="main">
					${this.toolbar()}
					${this.docs()}
					${this.dock()}
				</div>
			</div>
			<div class="redbox"></div>
			<svg class="arrow" width="1328" height="845" viewBox="0 0 1328 845">
				<path d="M871.500 681.500L875 672 1225 793.500 1227 787 1250 809 1217 814 1220 804z" fill="#ff4343" stroke="#ff4343" stroke-linejoin="round"/>
			</svg>
		</div>`;
	}

}

declare global {
	interface HTMLElementTagNameMap {
		'app-root': AppRoot
	}
}
